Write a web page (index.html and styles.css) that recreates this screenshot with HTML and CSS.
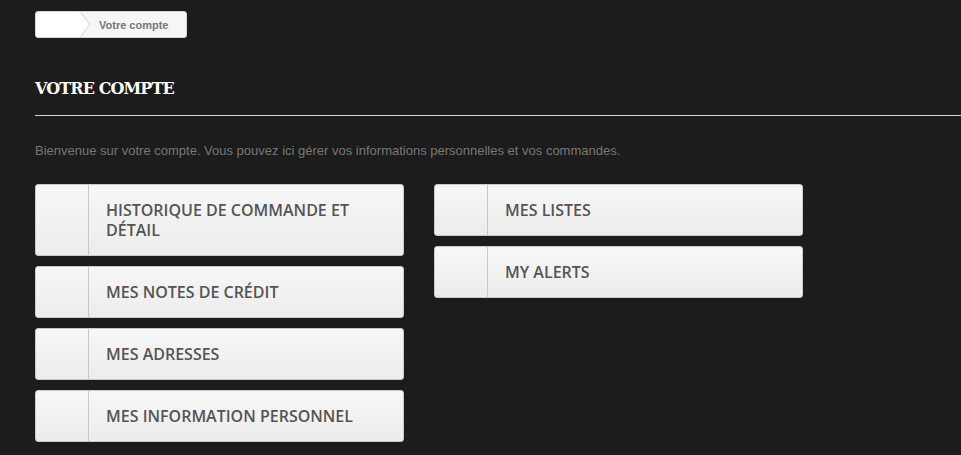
FILE: index.html
```html
<!DOCTYPE html>
<html lang="fr">
<head>
  <meta charset="UTF-8" />
  <title>Votre compte</title>
  <link rel="stylesheet" href="styles.css">
</head>
<body>
  <div class="page">
    <!-- Breadcrumb -->
    <div class="breadcrumb">
      <a class="home" href="#"></a>
      <span class="current">Votre compte</span>
    </div>

    <h1 class="page-heading">Votre compte</h1>

    <p class="info-account">Bienvenue sur votre compte. Vous pouvez ici gérer vos informations personnelles et vos commandes.</p>

    <div class="account-lists">
      <ul class="account-list">
        <li><a href="#"><span class="icon"></span><span class="label">Historique de commande et détail</span></a></li>
        <li><a href="#"><span class="icon"></span><span class="label">Mes notes de crédit</span></a></li>
        <li><a href="#"><span class="icon"></span><span class="label">Mes adresses</span></a></li>
        <li><a href="#"><span class="icon"></span><span class="label">Mes information personnel</span></a></li>
      </ul>
      <ul class="account-list">
        <li><a href="#"><span class="icon"></span><span class="label">Mes listes</span></a></li>
        <li><a href="#"><span class="icon"></span><span class="label">My alerts</span></a></li>
      </ul>
    </div>
  </div>
</body>
</html>
```

FILE: styles.css
```css
body {
  margin: 0;
  background-color: #1c1c1c;
  font-family: Arial, "Liberation Sans", sans-serif;
  overflow: hidden;
}

.page {
  padding: 11px 0 0 35px;
}

.breadcrumb {
  display: inline-flex;
  align-items: stretch;
  height: 27px;
  width: 152px;
  box-sizing: border-box;
  background: #f6f6f6;
  border: 1px solid #d6d4d4;
  border-radius: 3px;
  overflow: hidden;
}

.breadcrumb .home {
  position: relative;
  display: block;
  width: 42px;
  background: #fff;
}

.breadcrumb .home::after {
  content: "";
  position: absolute;
  top: 1px;
  right: -10px;
  width: 22px;
  height: 22px;
  background: #fff;
  border-top: 1px solid #d6d4d4;
  border-right: 1px solid #d6d4d4;
  transform: rotate(45deg) skew(8deg, 8deg);
}

.breadcrumb .current {
  display: flex;
  align-items: center;
  padding-left: 21px;
  font-size: 11px;
  font-weight: bold;
  color: #777;
}

.page-heading {
  margin: 38px 0 0;
  padding-bottom: 16px;
  border-bottom: 1px solid #d6d4d4;
  font-family: "DejaVu Serif", "Liberation Serif", serif;
  font-size: 16px;
  font-weight: bold;
  color: #fff;
  text-transform: uppercase;
  letter-spacing: -0.9px;
  line-height: 20px;
}

.info-account {
  margin: 27px 0 26px;
  font-size: 13px;
  color: #777;
}

.account-lists {
  display: flex;
  gap: 30px;
  align-items: flex-start;
}

.account-list {
  list-style: none;
  margin: 0;
  padding: 0;
  width: 369px;
  display: flex;
  flex-direction: column;
  gap: 10px;
}

.account-list a {
  display: flex;
  align-items: stretch;
  min-height: 52px;
  border: 1px solid #cacaca;
  border-radius: 3px;
  background: linear-gradient(to bottom, #f7f7f7 0%, #ececec 100%);
  text-decoration: none;
  box-sizing: border-box;
}

.account-list .icon {
  width: 52px;
  flex: none;
  border-right: 1px solid #c8c8c8;
}

.account-list .label {
  display: flex;
  align-items: center;
  padding: 15px 30px 15px 17px;
  font-family: "Open Sans", sans-serif;
  font-size: 16px;
  font-weight: 600;
  line-height: 20px;
  color: #555454;
  text-transform: uppercase;
}
```
